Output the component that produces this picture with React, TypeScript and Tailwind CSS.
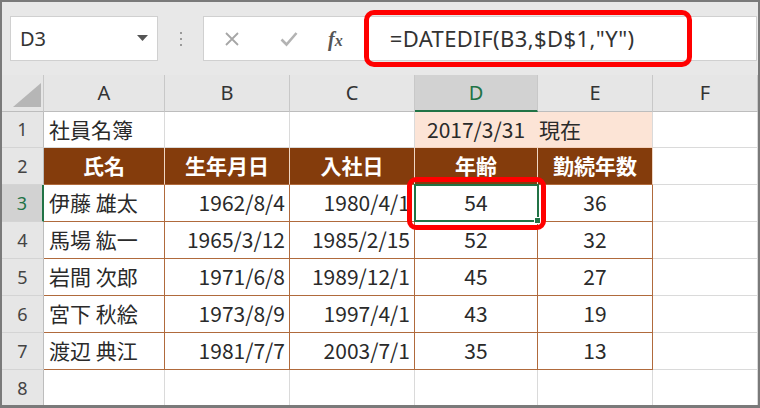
import React from 'react';

const cols = ['A', 'B', 'C', 'D', 'E', 'F'];

const headers = ['氏名', '生年月日', '入社日', '年齢', '勤続年数'];

const staff = [
  { name: '伊藤 雄太', birth: '1962/8/4', joined: '1980/4/1', age: 54, years: 36 },
  { name: '馬場 紘一', birth: '1965/3/12', joined: '1985/2/15', age: 52, years: 32 },
  { name: '岩間 次郎', birth: '1971/6/8', joined: '1989/12/1', age: 45, years: 27 },
  { name: '宮下 秋絵', birth: '1973/8/9', joined: '1997/4/1', age: 43, years: 19 },
  { name: '渡辺 典江', birth: '1981/7/7', joined: '2003/7/1', age: 35, years: 13 },
];

const ui = { fontFamily: '"Noto Sans", "Liberation Sans", sans-serif' };
const jp = { fontFamily: '"Noto Sans CJK JP", "Noto Sans", sans-serif' };

function RowHead({ n, active }: { n: number; active?: boolean }) {
  return (
    <div
      style={ui}
      className={
        active
          ? 'flex items-center justify-center border-b border-r-2 border-b-[#d4d4d4] border-r-[#217346] bg-[#d2d2d2] text-[18px] text-[#217346]'
          : 'flex items-center justify-center border-b border-r border-b-[#d4d4d4] border-r-[#bdbdbd] bg-[#e6e6e6] text-[18px] text-[#444]'
      }
    >
      {n}
    </div>
  );
}

function Gap() {
  return <div className="border-b border-r border-[#dadada] bg-white" />;
}

function DataCell({ children, align }: { children?: React.ReactNode; align: 'left' | 'right' | 'center' }) {
  const pos = align === 'left' ? 'justify-start pl-[5px]' : align === 'right' ? 'justify-end pr-[4px]' : 'justify-center';
  return (
    <div style={jp} className={`flex items-center whitespace-nowrap border-b border-r border-[#b06a3c] bg-white text-[21px] text-[#2a2a2a] ${pos}`}>
      {children}
    </div>
  );
}

export default function App() {
  return (
    <div className="h-[408px] w-[760px] overflow-hidden border-2 border-b-[3px] border-[#7a7a7a] bg-white">
      {/* formula bar */}
      <div className="relative flex h-[73px] items-center bg-[#e8e8e8]">
        <div className="ml-[8px] flex h-[45px] w-[148px] items-center justify-between border border-[#d0d0d0] bg-white pl-[9px] pr-[9px]">
          <span style={ui} className="text-[20px] text-[#333]">D3</span>
          <svg width="11" height="7" viewBox="0 0 11 7">
            <polygon points="0,0 11,0 5.5,6" fill="#555" />
          </svg>
        </div>
        <div className="ml-[22px] flex w-[2px] flex-col gap-[4px]">
          <span className="h-[2px] w-[2px] bg-[#9a9a9a]" />
          <span className="h-[2px] w-[2px] bg-[#9a9a9a]" />
          <span className="h-[2px] w-[2px] bg-[#9a9a9a]" />
        </div>
        <div className="ml-[21px] mr-[1px] flex h-[45px] flex-1 items-center border border-[#d0d0d0] bg-white">
          <svg width="16" height="16" viewBox="0 0 16 16" className="ml-[20px]">
            <path d="M2 2 L14 14 M14 2 L2 14" stroke="#a6a6a6" strokeWidth="1.8" fill="none" />
          </svg>
          <svg width="18" height="16" viewBox="0 0 18 16" className="ml-[40px]">
            <path d="M1.5 8.5 L6.5 13.5 L16.5 2" stroke="#b3b3b3" strokeWidth="2.6" fill="none" />
          </svg>
          <span
            style={{ fontFamily: '"Liberation Serif", serif' }}
            className="ml-[30px] text-[20px] font-bold italic leading-none text-[#555]"
          >
            f<span className="text-[16px]">x</span>
          </span>
          <span style={ui} className="ml-[47px] text-[22px] tracking-[0.4px] text-[#333]">
            =DATEDIF(B3,$D$1,"Y")
          </span>
        </div>
        <div className="absolute left-[362px] top-[8px] h-[57px] w-[328px] rounded-[10px] border-[5px] border-[#ff0000]" />
      </div>

      {/* sheet */}
      <div className="grid grid-cols-[42px_121px_125px_125px_123px_115px_1fr] grid-rows-[37px_36px_37px_37px_37px_37px_37px_37px_37px]">
        {/* column headers */}
        <div className="relative border-b border-r border-b-[#bdbdbd] border-r-[#c8c8c8] bg-[#e6e6e6]">
          <svg width="28" height="24" viewBox="0 0 28 24" className="absolute bottom-[4px] right-[2px]">
            <polygon points="0,24 28,24 28,0" fill="#b6b6b6" />
          </svg>
        </div>
        {cols.map((c) =>
          c === 'D' ? (
            <div
              key={c}
              style={ui}
              className="flex items-center justify-center border-b-2 border-r border-b-[#217346] border-r-[#c8c8c8] bg-[#d2d2d2] text-[20px] text-[#217346]"
            >
              {c}
            </div>
          ) : (
            <div
              key={c}
              style={ui}
              className="flex items-center justify-center border-b border-r border-b-[#bdbdbd] border-r-[#c8c8c8] bg-[#e6e6e6] text-[20px] text-[#333]"
            >
              {c}
            </div>
          ),
        )}

        {/* row 1 */}
        <RowHead n={1} />
        <div style={jp} className="flex items-center border-b border-r border-[#dadada] bg-white pl-[5px] text-[21px] text-[#2a2a2a]">
          社員名簿
        </div>
        <Gap />
        <Gap />
        <div style={jp} className="col-span-2 flex items-center whitespace-nowrap border-b border-r border-b-[#f3d2bd] border-r-[#dadada] bg-[#fce4d6] pl-[12px] text-[21px] text-[#2a2a2a]">
          2017/3/31<span className="ml-[14px]">現在</span>
        </div>
        <Gap />

        {/* row 2 */}
        <RowHead n={2} />
        {headers.map((h) => (
          <div
            key={h}
            style={jp}
            className="flex items-center justify-center border-b border-r border-b-[#b06a3c] border-r-[#efd6c4] bg-[#843c0c] text-[21px] font-bold text-white"
          >
            {h}
          </div>
        ))}
        <Gap />

        {/* rows 3-7 */}
        {staff.map((s, i) => (
          <React.Fragment key={s.name}>
            <RowHead n={i + 3} active={i === 0} />
            <DataCell align="left">{s.name}</DataCell>
            <DataCell align="right">{s.birth}</DataCell>
            <DataCell align="right">{s.joined}</DataCell>
            {i === 0 ? (
              <div style={jp} className="relative flex items-center justify-center border-b border-r border-[#b06a3c] bg-white text-[21px] text-[#2a2a2a]">
                {s.age}
                <div className="absolute -bottom-px -left-px -right-[2px] -top-px border-2 border-[#217346]" />
                <div className="absolute -bottom-[3px] -right-[4px] h-[7px] w-[7px] border border-white bg-[#217346]" />
                <div className="absolute -bottom-[9px] -left-[8px] -right-[9px] -top-[8px] rounded-[9px] border-[5px] border-[#ff0000]" />
              </div>
            ) : (
              <DataCell align="center">{s.age}</DataCell>
            )}
            <DataCell align="center">{s.years}</DataCell>
            <Gap />
          </React.Fragment>
        ))}

        {/* row 8 */}
        <RowHead n={8} />
        <Gap />
        <Gap />
        <Gap />
        <Gap />
        <Gap />
        <Gap />
      </div>
    </div>
  );
}
